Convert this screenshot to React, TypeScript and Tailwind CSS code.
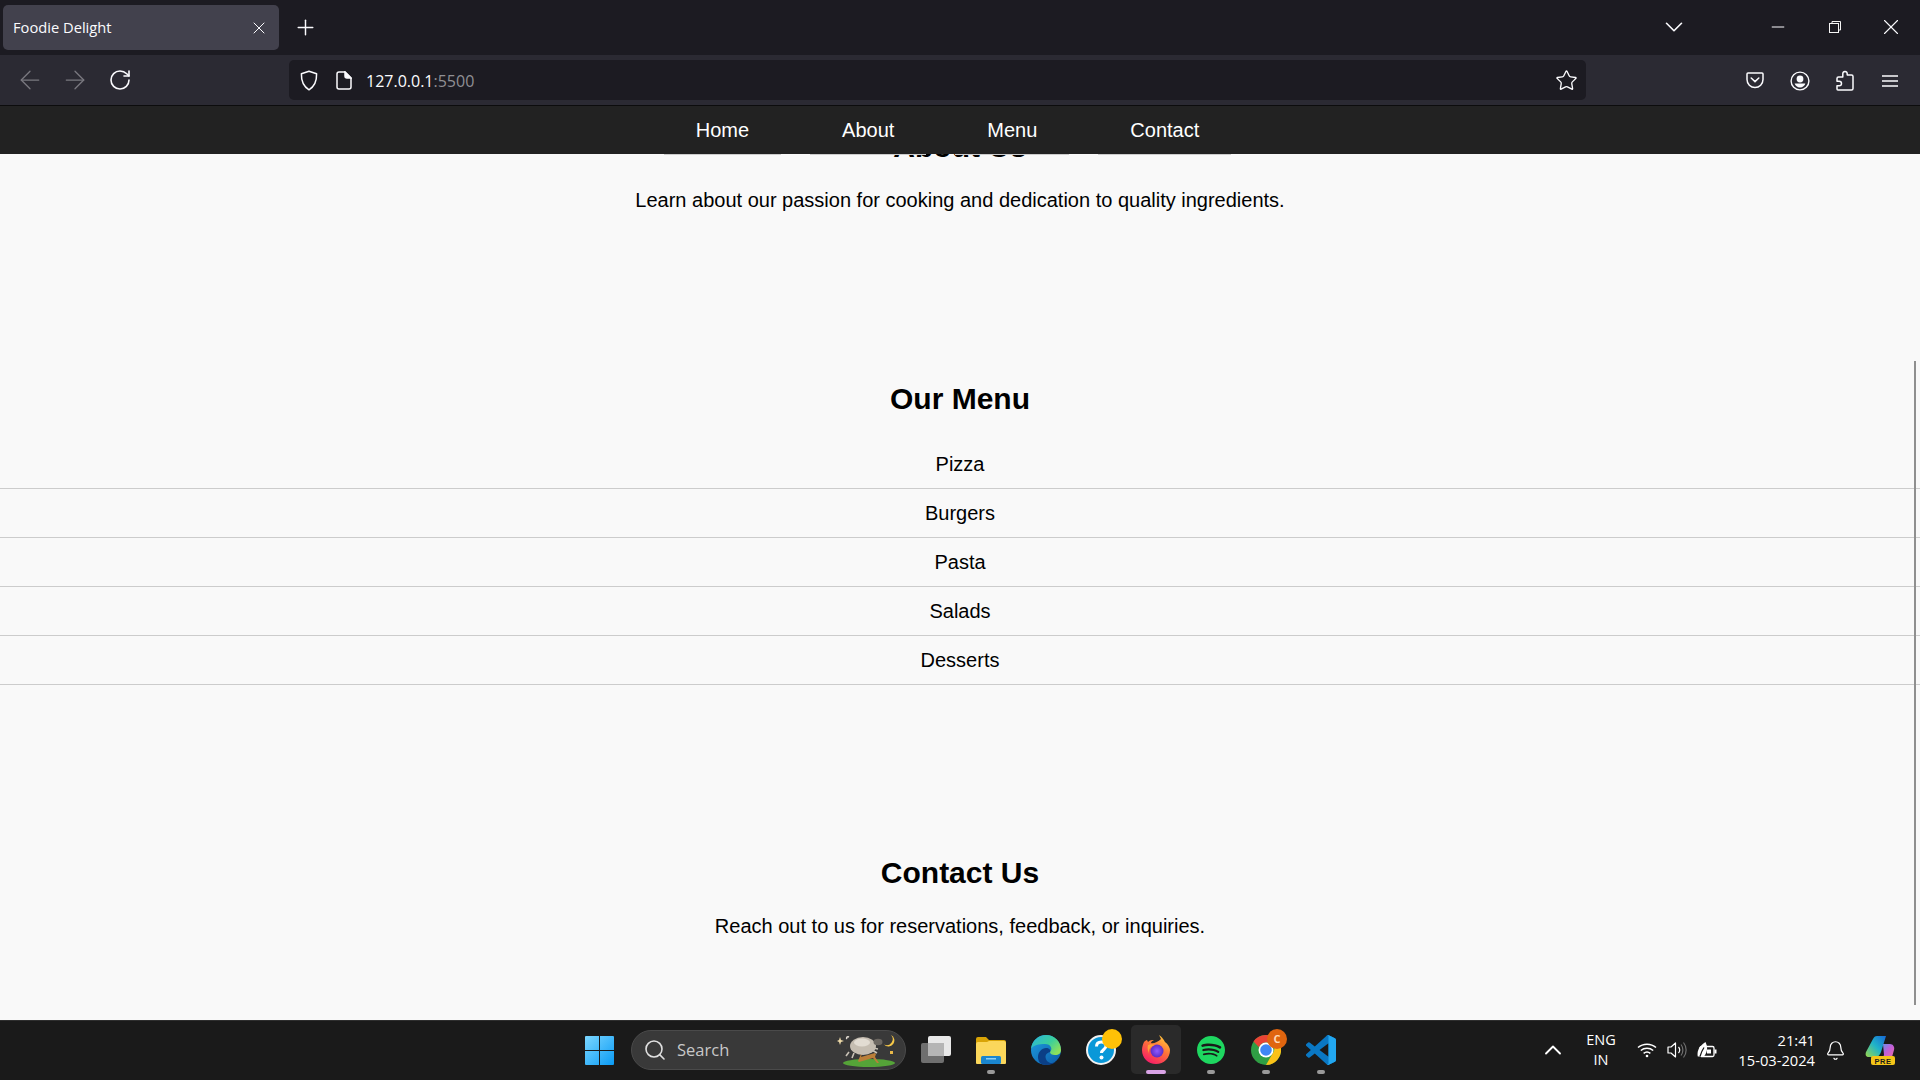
import { ArrowLeft, ArrowRight, Bell, ChevronDown, ChevronUp, Minus, Plus, RotateCw, Search, Star, X } from 'lucide-react'
import { SiSpotify } from 'react-icons/si'

const NAV = ['Home', 'About', 'Menu', 'Contact']
const MENU = ['Pizza', 'Burgers', 'Pasta', 'Salads', 'Desserts']

function ShieldIcon() {
  return (
    <svg width="18" height="21" viewBox="0 0 18 21" fill="none" stroke="#fbfbfe" strokeWidth="1.5">
      <path d="M9 1.2 16.6 3.8c.2 6.8-1.6 12.4-7.6 16-6-3.6-7.8-9.2-7.6-16z" strokeLinejoin="round" />
    </svg>
  )
}

function PageIcon() {
  return (
    <svg width="16" height="19" viewBox="0 0 16 19" fill="none" stroke="#fbfbfe" strokeWidth="1.5">
      <path d="M3 1h6l6 6v9a2 2 0 0 1-2 2H3a2 2 0 0 1-2-2V3a2 2 0 0 1 2-2z" strokeLinejoin="round" />
      <path d="M9 1v4a2 2 0 0 0 2 2h4z" fill="#fbfbfe" />
    </svg>
  )
}

function PocketIcon() {
  return (
    <svg width="18" height="17" viewBox="0 0 18 17" fill="none" stroke="#fbfbfe" strokeWidth="1.5">
      <path d="M2 1h14a1 1 0 0 1 1 1v5.5a8 8 0 0 1-16 0V2a1 1 0 0 1 1-1z" />
      <path d="m5.2 6 3.8 3.6L12.8 6" strokeLinecap="round" />
    </svg>
  )
}

function AvatarIcon() {
  return (
    <svg width="20" height="20" viewBox="0 0 20 20" fill="#fbfbfe">
      <circle cx="10" cy="10" r="8.9" fill="none" stroke="#fbfbfe" strokeWidth="1.4" />
      <circle cx="10" cy="8" r="3.4" />
      <path d="M4.6 12.6h10.8c-.6 2.3-2.8 4-5.4 4s-4.800-1.700-5.400-4z" />
    </svg>
  )
}

function PuzzleIcon() {
  return (
    <svg width="18" height="21" viewBox="0 0 18 21" fill="none" stroke="#fbfbfe" strokeWidth="1.5" strokeLinejoin="round">
      <path d="M9 1.500c1.500 0 2.400 1 2.200 3.400H15.500a1.500 1.500 0 0 1 1.500 1.500V18.500a1.500 1.500 0 0 1-1.500 1.500H2a1 1 0 0 1-1-1v-3.200h2.200c1.300 0 2.300-1 2.300-2.300s-1-2.300-2.300-2.300H1V8.500a1.500 1.500 0 0 1 1.500-1.500h4.300V4.900C6.600 2.500 7.500 1.500 9 1.500z" />
    </svg>
  )
}

function RestoreIcon() {
  return (
    <svg width="12" height="12" viewBox="0 0 12 12" fill="none" stroke="#f5f5f5" strokeWidth="1">
      <rect x="0.500" y="2.500" width="9" height="9" />
      <path d="M3 2.500V.500h8.500V9H9.500" />
    </svg>
  )
}

function WindowsLogo() {
  return (
    <svg width="29" height="29" viewBox="0 0 29 29">
      <defs>
        <linearGradient id="win" x1="0" y1="0" x2="1" y2="1">
          <stop offset="0" stopColor="#7bd6ff" />
          <stop offset="1" stopColor="#0a9bf5" />
        </linearGradient>
      </defs>
      <path d="M0 1a1 1 0 0 1 1-1h13v14H0zM15 0h13a1 1 0 0 1 1 1v13H15zM0 15h14v14H1a1 1 0 0 1-1-1zM15 15h14v13a1 1 0 0 1-1 1H15z" fill="url(#win)" />
    </svg>
  )
}

function SheepArt() {
  return (
    <svg width="60" height="34" viewBox="0 0 60 34">
      <ellipse cx="32" cy="30" rx="26" ry="4" fill="#55a338" />
      <path d="M21 28l3-7h1l-1 3 14-4 1 1-1 3 4 6h-2l-4-5-14 4z" fill="#bb7f39" />
      <path d="M12 19l-3 4M17 20l-2 5M35 17l5 3M36 15l5 1" stroke="#c9c2b6" strokeWidth="1.600" />
      <ellipse cx="26" cy="13" rx="13" ry="9" fill="#c5bdb1" />
      <ellipse cx="25" cy="9.500" rx="8" ry="4" fill="#e2dcd2" />
      <ellipse cx="41" cy="9" rx="4.500" ry="3.300" fill="#6d6862" />
      <path d="M54 2a6 6 0 1 1-7 9.500 6 6 0 0 0 7-9.500z" fill="#f7c948" />
      <path d="M3 4 4 7l3 1-3 1-1 3-1-3-2-1 2-1z" fill="#ecd9a8" />
      <path d="M12 4c-2-1-3 1-2 2" stroke="#e2dcd2" strokeWidth="1.500" fill="none" />
      <rect x="53" y="18" width="3" height="3" fill="#e9b949" />
    </svg>
  )
}

function TaskViewIcon() {
  return (
    <svg width="30" height="28" viewBox="0 0 30 28">
      <rect x="0" y="7" width="23" height="20" rx="2" fill="#6f6f6f" />
      <rect x="7" y="0" width="23" height="20" rx="2" fill="#e8e8e8" />
      <rect x="7" y="7" width="16" height="13" fill="#b5b5b5" />
    </svg>
  )
}

function FolderIcon() {
  return (
    <svg width="30" height="27" viewBox="0 0 30 27">
      <path d="M0 2a2 2 0 0 1 2-2h8l3 3h15a2 2 0 0 1 2 2v4H0z" fill="#d9a406" />
      <path d="M0 26V7a2 2 0 0 1 2-2h9l2-1h15a2 2 0 0 1 2 2v20a1 1 0 0 1-1 1H1a1 1 0 0 1-1-1z" fill="#fbd75b" />
      <rect x="5" y="19" width="20" height="8" rx="1.500" fill="#1a86cf" />
      <rect x="10" y="21" width="10" height="1.500" fill="#8fd0f5" />
    </svg>
  )
}

function EdgeIcon() {
  return (
    <svg width="30" height="30" viewBox="0 0 30 30">
      <defs>
        <linearGradient id="edgeA" x1="0" y1="0" x2="1" y2="0.700">
          <stop offset="0" stopColor="#2ab3e0" />
          <stop offset="0.600" stopColor="#3bcf9b" />
          <stop offset="1" stopColor="#8ee05a" />
        </linearGradient>
        <linearGradient id="edgeB" x1="0" y1="0" x2="1" y2="1">
          <stop offset="0" stopColor="#1f9fe0" />
          <stop offset="1" stopColor="#0c5aa8" />
        </linearGradient>
      </defs>
      <circle cx="15" cy="15" r="15" fill="url(#edgeB)" />
      <path d="M0 14C1 5 8 0 15 0c9 0 15 7 15 15 0 3-2 5-6 5-3 0-5-1-5-3 3-3 1-8-5-8C8 9 2 10 0 14z" fill="url(#edgeA)" />
      <path d="M19 17c-4 1-6 4-3 9 2 2 5 3 9 1-3 2-6 3-10 3-5 0-8-3-8-8 0-5 4-9 8-9 3 0 5 2 4 4z" fill="#0b3f86" />
    </svg>
  )
}

function HelpIcon() {
  return (
    <svg width="30" height="30" viewBox="0 0 30 30">
      <circle cx="15" cy="15" r="14" fill="#0a98d8" stroke="#f2f2f2" strokeWidth="2" />
      <path d="M10.500 11.500c0-3 2-4.500 4.800-4.500s4.700 1.500 4.700 4c0 3.500-4.500 3.500-4.500 7" fill="none" stroke="#fff" strokeWidth="3" />
      <circle cx="15.500" cy="22.500" r="2" fill="#fff" />
    </svg>
  )
}

function FirefoxIcon() {
  return (
    <svg width="28" height="29" viewBox="0 0 28 29">
      <defs>
        <linearGradient id="ffA" x1="0.800" y1="0" x2="0.200" y2="1">
          <stop offset="0" stopColor="#ffcd3a" />
          <stop offset="0.450" stopColor="#ff7139" />
          <stop offset="1" stopColor="#f5156c" />
        </linearGradient>
        <radialGradient id="ffB">
          <stop offset="0" stopColor="#9059ff" />
          <stop offset="1" stopColor="#5b2cc4" />
        </radialGradient>
      </defs>
      <path d="M17 0c4 3 5 5 6 7 3 2 5 6 5 8 0 8-6 14-14 14S0 23 0 15c0-3 1-6 2-8 1-1 2-2 3-2l1 2c2-2 4-2 6-2-2 1-3 2-3 3 2 1 7-1 10-4-1-2-2-4-2-4z" fill="url(#ffA)" />
      <circle cx="15" cy="16" r="6.500" fill="url(#ffB)" />
      <path d="M6 10c2-1 5-1 7 0-4 1-7 4-6 9-1-3-2-6-1-9z" fill="#ffa436" />
    </svg>
  )
}

function ChromeIcon() {
  return (
    <svg width="30" height="30" viewBox="0 0 30 30">
      <circle cx="15" cy="15" r="15" fill="#2f9e44" />
      <path d="M15 0a15 15 0 0 1 13 7.500H15a7.500 7.500 0 0 0-7 4.800L2.500 6.500A15 15 0 0 1 15 0z" fill="#e94335" />
      <path d="M28 7.500A15 15 0 0 1 15 30l6.500-11.300A7.500 7.500 0 0 0 20 7.500z" fill="#fbc117" />
      <circle cx="15" cy="15" r="7.500" fill="#fff" />
      <circle cx="15" cy="15" r="5.800" fill="#3f86f4" />
    </svg>
  )
}

function CodeIcon() {
  return (
    <svg width="30" height="30" viewBox="0 0 24 24">
      <path d="M23.150 2.587 18.210.21a1.494 1.494 0 0 0-1.705.29l-9.460 8.630-4.120-3.128a.999.999 0 0 0-1.276.057L.327 7.261A1 1 0 0 0 .326 8.740L3.899 12 .326 15.260a1 1 0 0 0 .001 1.479L1.650 17.940a.999.999 0 0 0 1.276.057l4.120-3.128 9.460 8.630a1.492 1.492 0 0 0 1.704.29l4.942-2.377A1.500 1.500 0 0 0 24 20.060V3.939a1.500 1.500 0 0 0-.850-1.352zm-5.146 14.861L10.826 12l7.178-5.448v10.896z" fill="#0a78c4" />
      <path d="M16.500.5a1.500 1.500 0 0 1 1.710-.29l4.940 2.377A1.500 1.500 0 0 1 24 3.939V20.060a1.500 1.500 0 0 1-.850 1.352l-4.940 2.378a1.500 1.500 0 0 1-1.710-.29c.6.500 1.500.100 1.500-.700V1.200c0-.800-.900-1.200-1.500-.700z" fill="#22a7f0" />
    </svg>
  )
}

function WifiIcon() {
  return (
    <svg width="20" height="16" viewBox="0 0 20 16" fill="none" stroke="#fff" strokeWidth="1.500">
      <path d="M1 5.500c5-4.500 13-4.500 18 0M3.800 8.500c3.500-3 8.900-3 12.400 0M6.600 11.300c2-1.600 4.800-1.600 6.800 0" />
      <circle cx="10" cy="14" r="1.300" fill="#fff" stroke="none" />
    </svg>
  )
}

function SpeakerIcon() {
  return (
    <svg width="20" height="18" viewBox="0 0 20 18" fill="none" stroke="#fff" strokeWidth="1.200">
      <path d="M1 6h3l4.500-4v14L4 12H1z" strokeLinejoin="round" />
      <path d="M11.500 6c1.500 1.800 1.500 4.200 0 6" />
      <path d="M14 3.500c2.500 3.200 2.500 7.800 0 11M16.500 1.500c3.500 4.500 3.500 10.500 0 15" stroke="#6f6f6f" />
    </svg>
  )
}

function BatteryIcon() {
  return (
    <svg width="20" height="16" viewBox="0 0 20 16" fill="none" stroke="#fff" strokeWidth="1.300">
      <rect x="3" y="4.500" width="14" height="10" rx="1.500" />
      <rect x="17.500" y="7.500" width="2" height="4" fill="#fff" stroke="none" />
      <path d="M.8 14.500C-.5 8 3 4 8.500 0c2.500 5 2 10-1.500 14.500z" fill="#fff" stroke="none" />
      <path d="M3 14.500c1-3.500 2-6 4-9" stroke="#1a1a1a" />
      <path d="M10 7.500h4v4h-4z" fill="#fff" stroke="none" />
    </svg>
  )
}

function CopilotIcon() {
  return (
    <svg width="30" height="29" viewBox="0 0 30 29">
      <defs>
        <linearGradient id="copA" x1="0" y1="1" x2="1" y2="0">
          <stop offset="0" stopColor="#9bd84a" />
          <stop offset="0.500" stopColor="#20b4c8" />
          <stop offset="1" stopColor="#1668d8" />
        </linearGradient>
        <linearGradient id="copB" x1="0" y1="0" x2="1" y2="1">
          <stop offset="0" stopColor="#4aa0f0" />
          <stop offset="0.500" stopColor="#c35fd8" />
          <stop offset="1" stopColor="#f0709a" />
        </linearGradient>
      </defs>
      <path d="M8 3c1-2 2-3 4-3h9l-5 16c-1 3-3 5-6 5H4c-3 0-4-2-3-5z" fill="url(#copA)" />
      <path d="M18 8h7c3 0 5 3 4 6l-2 7c-1 2-3 3-5 3h-8c3-1 4-3 5-5z" fill="url(#copB)" />
      <rect x="6" y="20" width="24" height="9" rx="2" fill="#f5c518" />
      <text x="18" y="27.500" textAnchor="middle" fontSize="7.500" fontWeight="700" fill="#1a1a1a" fontFamily="Liberation Sans, sans-serif" letterSpacing="0.500">PRE</text>
    </svg>
  )
}

function Dot({ wide }: { wide?: boolean }) {
  return (
    <span
      className={
        wide
          ? 'absolute left-[5px] top-[35px] h-[4px] w-[20px] rounded-full bg-[#d9a3e6]'
          : 'absolute left-[11px] top-[35px] h-[4px] w-[8px] rounded-full bg-[#9a9a9a]'
      }
    />
  )
}

export default function App() {
  return (
    <div className="relative flex h-screen w-full flex-col overflow-hidden bg-[#f9f9f9] font-['Liberation_Sans',sans-serif] text-black">
      {/* tab strip */}
      <div className="flex h-[55px] shrink-0 items-start bg-[#1c1b22] font-['Open_Sans',sans-serif] text-[#fbfbfe]">
        <div className="ml-[3px] mt-[5px] flex h-[45px] w-[276px] items-center justify-between rounded-[5px] bg-[#42414d] pl-[10px] pr-[10px]">
          <span className="text-[14.700px]">Foodie Delight</span>
          <X className="h-[20px] w-[20px]" strokeWidth={1.2} />
        </div>
        <Plus className="ml-[14px] mt-[15px] h-[25px] w-[25px]" strokeWidth={1.4} />
        <div className="ml-auto mt-[12px] flex items-center">
          <ChevronDown className="h-[30px] w-[30px]" strokeWidth={1.3} />
          <Minus className="ml-[79px] h-[20px] w-[20px]" strokeWidth={1.2} />
          <div className="ml-[41px]"><RestoreIcon /></div>
          <X className="ml-[37px] mr-[16px] h-[26px] w-[26px]" strokeWidth={1} />
        </div>
      </div>

      {/* toolbar */}
      <div className="flex h-[51px] shrink-0 items-start border-b border-[#0c0c0d] bg-[#2b2a33] font-['Open_Sans',sans-serif] text-[#fbfbfe]">
        <div className="mt-[10px] flex items-center pl-[15px]">
          <ArrowLeft className="h-[30px] w-[30px] text-[#7a7980]" strokeWidth={1} />
          <ArrowRight className="ml-[15px] h-[30px] w-[30px] text-[#7a7980]" strokeWidth={1} />
          <RotateCw className="ml-[18px] h-[24px] w-[24px]" strokeWidth={1.6} />
        </div>
        <div className="ml-[157px] mt-[5px] flex h-[40px] w-[1297px] items-center rounded-[5px] bg-[#1c1b22] pl-[11px] pr-[8px]">
          <ShieldIcon />
          <span className="ml-[18px]"><PageIcon /></span>
          <span className="ml-[14px] pt-[2px] text-[16px]">
            127.0.0.1<span className="text-[#8f8f94]">:5500</span>
          </span>
          <Star className="ml-auto h-[23px] w-[23px]" strokeWidth={1.4} />
        </div>
        <div className="ml-[160px] mt-[15px] flex items-center">
          <PocketIcon />
          <span className="ml-[26px]"><AvatarIcon /></span>
          <span className="ml-[26px]"><PuzzleIcon /></span>
          <svg className="ml-[28px]" width="16" height="14" viewBox="0 0 16 14" stroke="#fbfbfe" strokeWidth="1.500">
            <path d="M0 2h16M0 7h16M0 12h16" />
          </svg>
        </div>
      </div>

      {/* site nav, list item borders hang 1px below it */}
      <nav className="relative z-10 h-[48px] shrink-0 bg-[#222222] text-white">
        <ul className="flex justify-center gap-[29px] pr-[25px]">
          {NAV.map((n) => (
            <li key={n} className="h-[49px] border-b border-[#cccccc] px-[32px] pt-[10px] text-[20px] leading-[28px]">
              {n}
            </li>
          ))}
        </ul>
      </nav>

      <main className="min-h-0 flex-1 overflow-hidden text-center">
        <div className="-mt-[28px]">
          <section className="pb-[164px]">
            <h2 className="mb-[18px] text-[30px] font-bold leading-[42px]">About Us</h2>
            <p className="text-[20px] leading-[28px]">Learn about our passion for cooking and dedication to quality ingredients.</p>
          </section>
          <section className="pb-[166px]">
            <h2 className="mb-[20px] text-[30px] font-bold leading-[42px]">Our Menu</h2>
            <ul>
              {MENU.map((m) => (
                <li key={m} className="border-b border-[#cccccc] py-[10px] text-[20px] leading-[28px]">
                  {m}
                </li>
              ))}
            </ul>
          </section>
          <section>
            <h2 className="mb-[18px] pt-[1px] text-[30px] font-bold leading-[42px]">Contact Us</h2>
            <p className="text-[20px] leading-[28px]">Reach out to us for reservations, feedback, or inquiries.</p>
          </section>
        </div>
      </main>

      {/* overlay scrollbar */}
      <div className="absolute left-[1914px] top-[361px] h-[644px] w-[2px] bg-[#8f8f8f]" />

      {/* windows taskbar */}
      <footer className="flex h-[60px] shrink-0 items-center border-t border-[#2e2e2e] bg-[#1a1a1a] pb-[1px] pl-[585px] font-['Open_Sans',sans-serif] text-white">
        <WindowsLogo />
        <div className="ml-[17px] flex h-[40px] w-[275px] items-center rounded-full border border-[#4a4a4a] bg-[#393939] pl-[11px] pr-[8px]">
          <Search className="h-[24px] w-[24px] text-[#e0e0e0]" strokeWidth={1.6} />
          <span className="ml-[10px] text-[16.500px] text-[#c8c8c8]">Search</span>
          <span className="ml-auto"><SheepArt /></span>
        </div>
        <div className="ml-[15px] flex items-center gap-[25px]">
          <div className="relative flex h-[30px] w-[30px] items-center justify-center"><TaskViewIcon /></div>
          <div className="relative flex h-[30px] w-[30px] items-center justify-center"><FolderIcon /><Dot /></div>
          <div className="relative flex h-[30px] w-[30px] items-center justify-center"><EdgeIcon /></div>
          <div className="relative flex h-[30px] w-[30px] items-center justify-center">
            <HelpIcon />
            <span className="absolute left-[16px] -top-[6px] h-[20px] w-[20px] rounded-full bg-[#ffc107]" />
          </div>
          <div className="relative flex h-[30px] w-[30px] items-center justify-center">
            <span className="absolute -left-[10px] -top-[10px] h-[49px] w-[50px] rounded-[5px] bg-[#2a2a2a]" />
            <span className="relative -mt-[1px]"><FirefoxIcon /></span>
            <Dot wide />
          </div>
          <div className="relative flex h-[30px] w-[30px] items-center justify-center">
            <SiSpotify className="h-[28px] w-[28px] text-[#1ed760]" />
            <Dot />
          </div>
          <div className="relative flex h-[30px] w-[30px] items-center justify-center">
            <ChromeIcon />
            <span className="absolute left-[16px] -top-[6px] flex h-[20px] w-[20px] items-center justify-center rounded-full bg-[#e0650f] text-[11px] font-bold text-[#ffd9b8]">C</span>
            <Dot />
          </div>
          <div className="relative flex h-[30px] w-[30px] items-center justify-center"><CodeIcon /><Dot /></div>
        </div>

        {/* tray */}
        <div className="ml-auto flex items-center">
          <ChevronUp className="h-[28px] w-[28px]" strokeWidth={1.6} />
          <div className="ml-[14px] w-[40px] text-center text-[14.500px] leading-[20px]">
            <div>ENG</div>
            <div>IN</div>
          </div>
          <span className="ml-[16px]"><WifiIcon /></span>
          <span className="ml-[10px]"><SpeakerIcon /></span>
          <span className="ml-[10px]"><BatteryIcon /></span>
          <div className="ml-[8px] w-[90px] text-right text-[14.700px] leading-[20px]">
            <div>21:41</div>
            <div>15-03-2024</div>
          </div>
          <Bell className="ml-[10px] h-[21px] w-[21px]" strokeWidth={1.4} />
          <span className="ml-[19px] mr-[25px]"><CopilotIcon /></span>
        </div>
      </footer>
    </div>
  )
}
